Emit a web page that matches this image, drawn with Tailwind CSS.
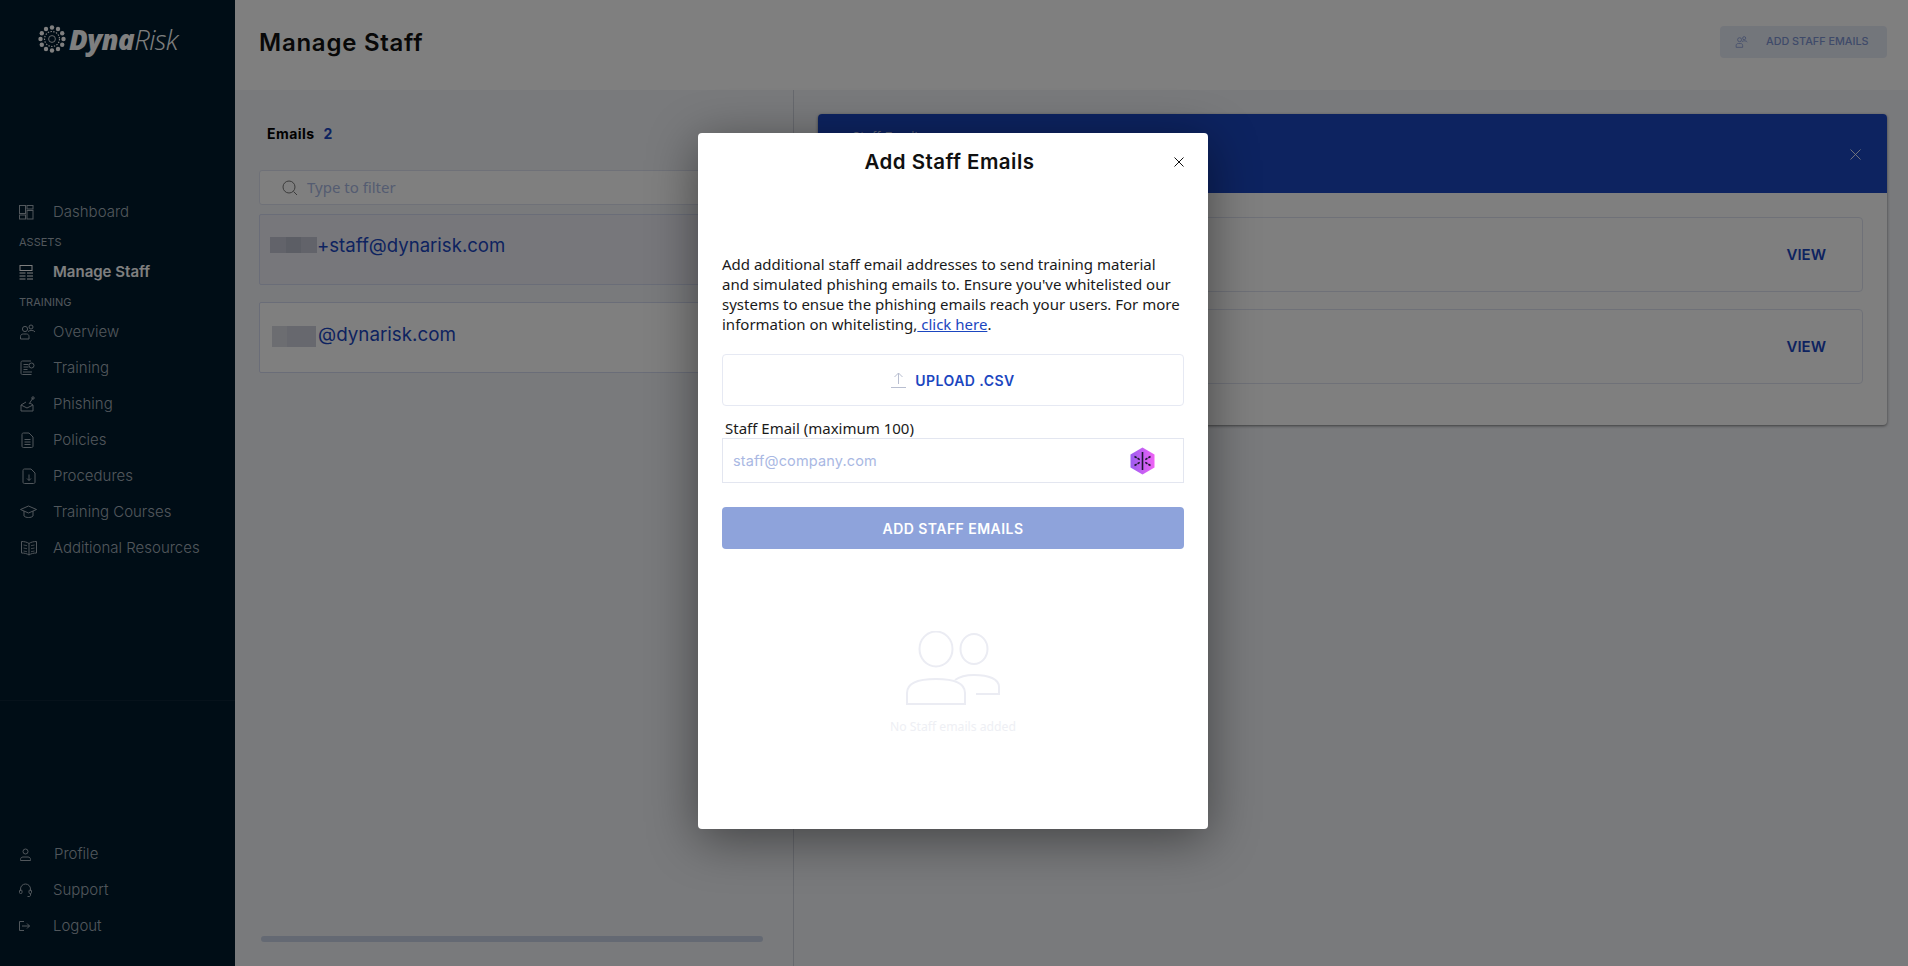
<!DOCTYPE html>
<html>
<head>
<meta charset="utf-8">
<title>Manage Staff</title>
<script src="https://cdn.jsdelivr.net/npm/@tailwindcss/browser@4"></script>
</head>
<body class="m-0 h-[966px] w-[1908px] overflow-hidden bg-[#f2f4f8] font-['Inter',sans-serif]">
<div class="relative flex h-[966px] w-[1908px]">
  <!-- Sidebar -->
  <aside class="flex h-full w-[235px] shrink-0 flex-col bg-[#001a2c] text-[15px] font-light text-[#a3aeb8]">
    <div class="flex h-[194px] items-start pl-[38px] pt-[24px]">
      <svg width="28" height="28" viewBox="0 0 28 28" class="mt-[1px] shrink-0" fill="#fff">
        <g><circle cx="14" cy="2.5" r="2.2"/><circle cx="20" cy="4" r="2.2"/><circle cx="24.2" cy="8.2" r="2.2"/><circle cx="25.5" cy="14" r="2.2"/><circle cx="24.2" cy="19.8" r="2.2"/><circle cx="20" cy="24" r="2.2"/><circle cx="14" cy="25.5" r="2.2"/><circle cx="8" cy="24" r="2.2"/><circle cx="3.8" cy="19.8" r="2.2"/><circle cx="2.5" cy="14" r="2.2"/><circle cx="3.8" cy="8.2" r="2.2"/><circle cx="8" cy="4" r="2.2"/></g>
        <circle cx="14" cy="14" r="7.5" fill="none" stroke="#fff" stroke-width="1.2" stroke-dasharray="1.4 1.4"/>
        <circle cx="14" cy="14" r="3.4" fill="none" stroke="#fff" stroke-width="0.8"/>
      </svg>
      <div class="ml-[3px] -mt-[2px] font-['Open_Sans',sans-serif] text-[27.5px] leading-[36px] italic tracking-[-0.6px] text-white"><span class="font-extrabold">Dyna</span><span class="font-light">Risk</span></div>
    </div>
    <nav class="flex flex-col">
      <a class="flex h-[36px] items-center gap-[19px] pl-[19px]"><svg width="15" height="15" viewBox="0 0 15 15" fill="none" stroke="currentColor" class="w-[15px] shrink-0"><rect x=".5" y=".5" width="6" height="8"/><rect x="8" y=".5" width="6" height="3.5"/><rect x="8" y="5.5" width="6" height="8.5"/><rect x=".5" y="10" width="6" height="4"/></svg><span>Dashboard</span></a>
      <div class="flex h-[24px] items-center pl-[19px] text-[11px] font-normal">ASSETS</div>
      <a class="flex h-[36px] items-center gap-[19px] pl-[19px] font-semibold text-white"><svg width="15" height="15" viewBox="0 0 15 15" fill="none" stroke="currentColor" class="w-[15px] shrink-0"><rect x="1" y=".5" width="12" height="5"/><path d="M.5 8h6M8 8h6M.5 11h6M8 11h6M.5 14h6M8 14h6"/></svg><span>Manage Staff</span></a>
      <div class="flex h-[24px] items-center pl-[19px] text-[11px] font-normal">TRAINING</div>
      <a class="flex h-[36px] items-center gap-[17px] pl-[19px]"><svg width="17" height="16" viewBox="0 0 17 16" fill="none" stroke="currentColor" class="shrink-0"><circle cx="6" cy="5" r="2.6"/><circle cx="12" cy="3" r="2"/><path d="M9 7.5c2-1.5 6-1.5 7 .5M1.500 15v-2.500c0-1.500 1-2.500 3-2.500h3c1.500 0 2.500 1 2.500 2.500V15z"/></svg><span>Overview</span></a>
      <a class="flex h-[36px] items-center gap-[18px] pl-[20px]"><svg width="15" height="16" viewBox="0 0 15 16" fill="none" stroke="currentColor" class="shrink-0"><path d="M11 1H2.500C1.500 1 1 1.500 1 2.500V13c0 1 .5 1.500 1.500 1.500h9"/><path d="M3.500 4.500h5M3.500 7h5M3.500 9.500h4M3 12h9"/><circle cx="11.500" cy="5.500" r="2.500"/></svg><span>Training</span></a>
      <a class="flex h-[36px] items-center gap-[18px] pl-[20px]"><svg width="15" height="16" viewBox="0 0 15 16" fill="none" stroke="currentColor" class="shrink-0"><path d="M1 9v6h12V9L7 12z"/><path d="M1 9l5-3M13 9l-3-2M9 8l4-6"/><circle cx="13" cy="2" r="1.200"/></svg><span>Phishing</span></a>
      <a class="flex h-[36px] items-center gap-[19px] pl-[21px]"><svg width="13" height="16" viewBox="0 0 13 16" fill="none" stroke="currentColor" class="shrink-0"><path d="M1 2.500C1 1.500 1.500 1 2.500 1H8l4 4v9c0 1-.5 1.500-1.500 1.500h-8C1.500 15.500 1 15 1 14z"/><path d="M3.500 7.500h6M3.500 10h6M3.500 12.500h6"/></svg><span>Policies</span></a>
      <a class="flex h-[36px] items-center gap-[17px] pl-[22px]"><svg width="14" height="16" viewBox="0 0 14 16" fill="none" stroke="currentColor" class="shrink-0"><path d="M1 2.500C1 1.500 1.500 1 2.500 1H9l4 4v9c0 1-.5 1.500-1.500 1.500h-9C1.500 15.500 1 15 1 14z"/><path d="M7 6.500v6M5 10.500l2 2 2-2"/></svg><span>Procedures</span></a>
      <a class="flex h-[36px] items-center gap-[16px] pl-[20px]"><svg width="17" height="14" viewBox="0 0 17 14" fill="none" stroke="currentColor" class="shrink-0"><path d="M.5 4.500L8.500 1l8 3.500-8 3.500z"/><path d="M4 6v5c1.500 2 7.500 2 9 0V6"/></svg><span>Training Courses</span></a>
      <a class="flex h-[36px] items-center gap-[16px] pl-[21px]"><svg width="16" height="16" viewBox="0 0 16 16" fill="none" stroke="currentColor" class="shrink-0"><path d="M8 3.500C6 2 3 1.500.5 1.500V13c2.500 0 5.500.5 7.500 2 2-1.500 5-2 7.500-2V1.500C13 1.500 10 2 8 3.500zM8 3.500V15"/><path d="M2.500 5l3.500.7M2.500 8l3.500.7M2.500 11l3.500.7M13.500 5l-3.500.7M13.500 8l-3.500.7M13.500 11l-3.500.7" stroke-width=".8"/></svg><span>Additional Resources</span></a>
    </nav>
    <div class="mt-[134px] border-t border-white/5 pt-[135px]">
      <a class="flex h-[36px] items-center gap-[23px] pl-[20px]"><svg width="11" height="13" viewBox="0 0 11 13" fill="none" stroke="currentColor" class="shrink-0"><circle cx="5.500" cy="3.500" r="2.500"/><path d="M.5 12.500v-1c0-1.500 1-2.500 2.500-2.500h5c1.500 0 2.500 1 2.500 2.500v1z"/></svg><span>Profile</span></a>
      <a class="flex h-[36px] items-center gap-[21px] pl-[19px]"><svg width="13" height="14" viewBox="0 0 13 14" fill="none" stroke="currentColor" class="shrink-0"><path d="M1.500 8V6a5 5 0 0 1 10 0v2"/><rect x=".5" y="7" width="2.500" height="3.500" rx="1"/><rect x="10" y="7" width="2.500" height="3.500" rx="1"/><path d="M11.500 10.500v1.500c0 1-.5 1.500-1.500 1.500H8.500"/></svg><span>Support</span></a>
      <a class="flex h-[36px] items-center gap-[23px] pl-[19px]"><svg width="11" height="10" viewBox="0 0 11 10" fill="none" stroke="currentColor" class="shrink-0"><path d="M5 .5H.5v9H5M3 5h7.500M8 2.500L10.500 5 8 7.500"/></svg><span>Logout</span></a>
    </div>
  </aside>

  <!-- Main -->
  <main class="flex min-w-0 flex-1 flex-col">
    <header class="flex h-[90px] shrink-0 items-center justify-between bg-white pl-[24px] pr-[21px]">
      <h1 class="mb-[4px] text-[24px] font-semibold tracking-[0.75px] text-[#101010]">Manage Staff</h1>
      <button class="mb-[6px] flex h-[32px] w-[167px] items-center gap-[18px] rounded-[4px] bg-[#e7ecf7] pl-[15px] text-[10.800px] font-medium text-[#7e95d3]">
        <svg width="13" height="14" viewBox="0 0 17 16" fill="none" stroke="currentColor" class="shrink-0"><circle cx="6" cy="5" r="2.600"/><circle cx="12" cy="3" r="2"/><path d="M9 7.500c2-1.500 6-1.500 7 .5M1.500 15v-2.500c0-1.500 1-2.500 3-2.500h3c1.500 0 2.500 1 2.500 2.500V15z"/></svg>
        ADD STAFF EMAILS
      </button>
    </header>
    <div class="flex min-h-0 flex-1">
      <!-- list -->
      <section class="relative flex w-[559px] shrink-0 flex-col border-r border-[#cfd3dc] pl-[24px]">
        <div class="flex h-[80px] items-center pl-[8px] pt-[7px] text-[14px] font-bold tracking-[0.45px] text-black">Emails <span class="ml-[9px] text-[#1b46c0]">2</span></div>
        <div class="flex h-[35px] w-[535px] items-center rounded-[3px] border border-[#dfe3f0] bg-white pl-[22px] text-[15px] text-[#a9b8e3]">
          <svg width="16" height="16" viewBox="0 0 16 16" fill="none" stroke="#777" class="mr-[9px] shrink-0"><circle cx="7" cy="7" r="6"/><path d="M11.500 11.500L15 15"/></svg>
          <span class="font-['Noto_Sans',sans-serif]">Type to filter</span>
        </div>
        <div class="mt-[9px] flex h-[71px] w-[535px] items-start rounded-[2px] border border-[#d5daf0] bg-[#eeeff6] pl-[10px] pt-[17px] text-[18.600px] text-[#1b46c0]">
          <span class="mt-[5px] flex h-[16px] w-[47px]"><i class="block h-full flex-1 bg-[#c5c7d4]"></i><i class="block h-full flex-1 bg-[#b9bccb]"></i><i class="block h-full flex-1 bg-[#c5c7d4]"></i></span><span>+staff@dynarisk.com</span>
        </div>
        <div class="mt-[17px] flex h-[71px] w-[535px] items-start rounded-[2px] border border-[#d5daf0] bg-white pl-[12px] pt-[18px] text-[18.800px] text-[#1b46c0]">
          <span class="mr-[2px] mt-[5px] flex h-[21px] w-[44px]"><i class="block h-full w-[15px] bg-[#d8dae3]"></i><i class="block h-full flex-1 bg-[#cfd1dc]"></i></span><span>@dynarisk.com</span>
        </div>
        <div class="absolute bottom-[24px] left-[26px] h-[6px] w-[502px] rounded-full bg-[#c9d3e6]"></div>
      </section>
      <!-- detail -->
      <section class="min-w-0 flex-1 pl-[24px] pr-[21px] pt-[24px]">
        <div class="rounded-[4px] bg-white shadow-[0_1px_3px_rgba(0,0,0,0.5)]">
          <div class="relative h-[79px] rounded-t-[4px] bg-[#1b46c0] pl-[34px] pt-[14px] text-[13px] text-white/70">
            Staff Emails
            <svg width="11" height="11" viewBox="0 0 11 11" fill="none" stroke="#fff" stroke-opacity=".85" class="absolute right-[26px] top-[35px]"><path d="M.5.5l10 10M10.500.5l-10 10"/></svg>
          </div>
          <div class="flex flex-col gap-[17px] px-[24px] pb-[41px] pt-[24px]">
            <div class="flex h-[75px] items-center justify-end rounded-[4px] border border-[#dfe3f0] pr-[36px] pt-[2px] text-[15px] font-semibold text-[#1b46c0]">VIEW</div>
            <div class="flex h-[75px] items-center justify-end rounded-[4px] border border-[#dfe3f0] pr-[36px] pt-[2px] text-[15px] font-semibold text-[#1b46c0]">VIEW</div>
          </div>
        </div>
      </section>
    </div>
  </main>

  <!-- Overlay -->
  <div class="absolute inset-0 bg-black/50"></div>

  <!-- Modal -->
  <div class="absolute left-[698px] top-[133px] flex h-[696px] w-[510px] flex-col rounded-[4px] bg-white px-[24px] shadow-[0_10px_50px_rgba(0,0,0,0.45)]">
    <div class="relative -mx-[24px] flex h-[58px] items-center justify-center pr-[7px]">
      <h2 class="text-[20.500px] font-semibold tracking-[0.45px] text-[#101010]">Add Staff Emails</h2>
      <svg width="10" height="10" viewBox="0 0 10 10" fill="none" stroke="#111" class="absolute right-[24px] top-[24px]"><path d="M.5.5l9 9M9.500.5l-9 9"/></svg>
    </div>
    <p class="mt-[63px] font-['Noto_Sans',sans-serif] text-[15px] leading-[20px] text-[#1a1a1a]">Add additional staff email addresses to send training material and simulated phishing emails to. Ensure you've whitelisted our systems to ensue the phishing emails reach your users. For more information on whitelisting,<a class="text-[#1b46c0] underline"> click here</a>.</p>
    <div class="mt-[20px] flex h-[52px] w-[462px] items-center justify-center gap-[9px] rounded-[4px] border border-[#e6e9f3] text-[14px] font-semibold tracking-[0.45px] text-[#1b46c0]">
      <svg width="15" height="16" viewBox="0 0 15 16" fill="none" stroke="#b8bed0" class="shrink-0"><path d="M7.500 12V1M3.500 5l4-4 4 4M0 15.500h15"/></svg>
      UPLOAD .CSV
    </div>
    <label class="mt-[13px] block h-[19px] pl-[3px] font-['Noto_Sans',sans-serif] text-[15px] leading-[19px] text-[#1a1a1a]">Staff Email (maximum 100)</label>
    <div class="flex h-[45px] w-[462px] items-center justify-between border border-[#e3e6f0] pl-[10px] pr-[28px] text-[14.500px] tracking-[0.15px] text-[#a9b8e3]">
      <span>staff@company.com</span>
      <svg width="25" height="28" viewBox="0 0 25 28" class="shrink-0">
        <defs><linearGradient id="g" x1="0" x2="1" y1="0" y2="0"><stop offset="0" stop-color="#9a5cf0"/><stop offset="1" stop-color="#ef62f5"/></linearGradient></defs>
        <path d="M12.500 0.500L24.500 7.500V20.500L12.500 27.500L.5 20.500V7.500z" fill="url(#g)"/>
        <path d="M12.500 5V23" stroke="#1c1630" stroke-width="1.600"/>
        <path d="M4.500 9.500l6 3.500M20.500 9.500l-6 3.500M4.500 18.500l6-3.500M20.500 18.500l-6-3.500" stroke="#1c1630" stroke-width="1.500" stroke-dasharray="2.500 1"/>
      </svg>
    </div>
    <button class="mt-[24px] flex h-[42px] w-[462px] shrink-0 items-center justify-center rounded-[4px] bg-[#8ea3db] text-[14px] font-semibold tracking-[0.45px] text-white">ADD STAFF EMAILS</button>
    <div class="mt-[82px] flex w-[462px] flex-col items-center">
      <svg width="94" height="75" viewBox="0 0 94 75" fill="none" stroke="#ebecf3" stroke-width="2">
        <ellipse cx="30" cy="18" rx="16.500" ry="17.500"/>
        <ellipse cx="68" cy="18" rx="13.500" ry="15"/>
        <path d="M1 73V62c0-9 10-14 29-14s29 5 29 14v11z"/>
        <path d="M49 49c4-3 12-5 19-5 15 0 25 4 25 12v7H70"/>
      </svg>
      <div class="mt-[12px] font-['Noto_Sans',sans-serif] text-[12.200px] text-[#eeeff4]">No Staff emails added</div>
    </div>
  </div>
</div>
</body>
</html>
